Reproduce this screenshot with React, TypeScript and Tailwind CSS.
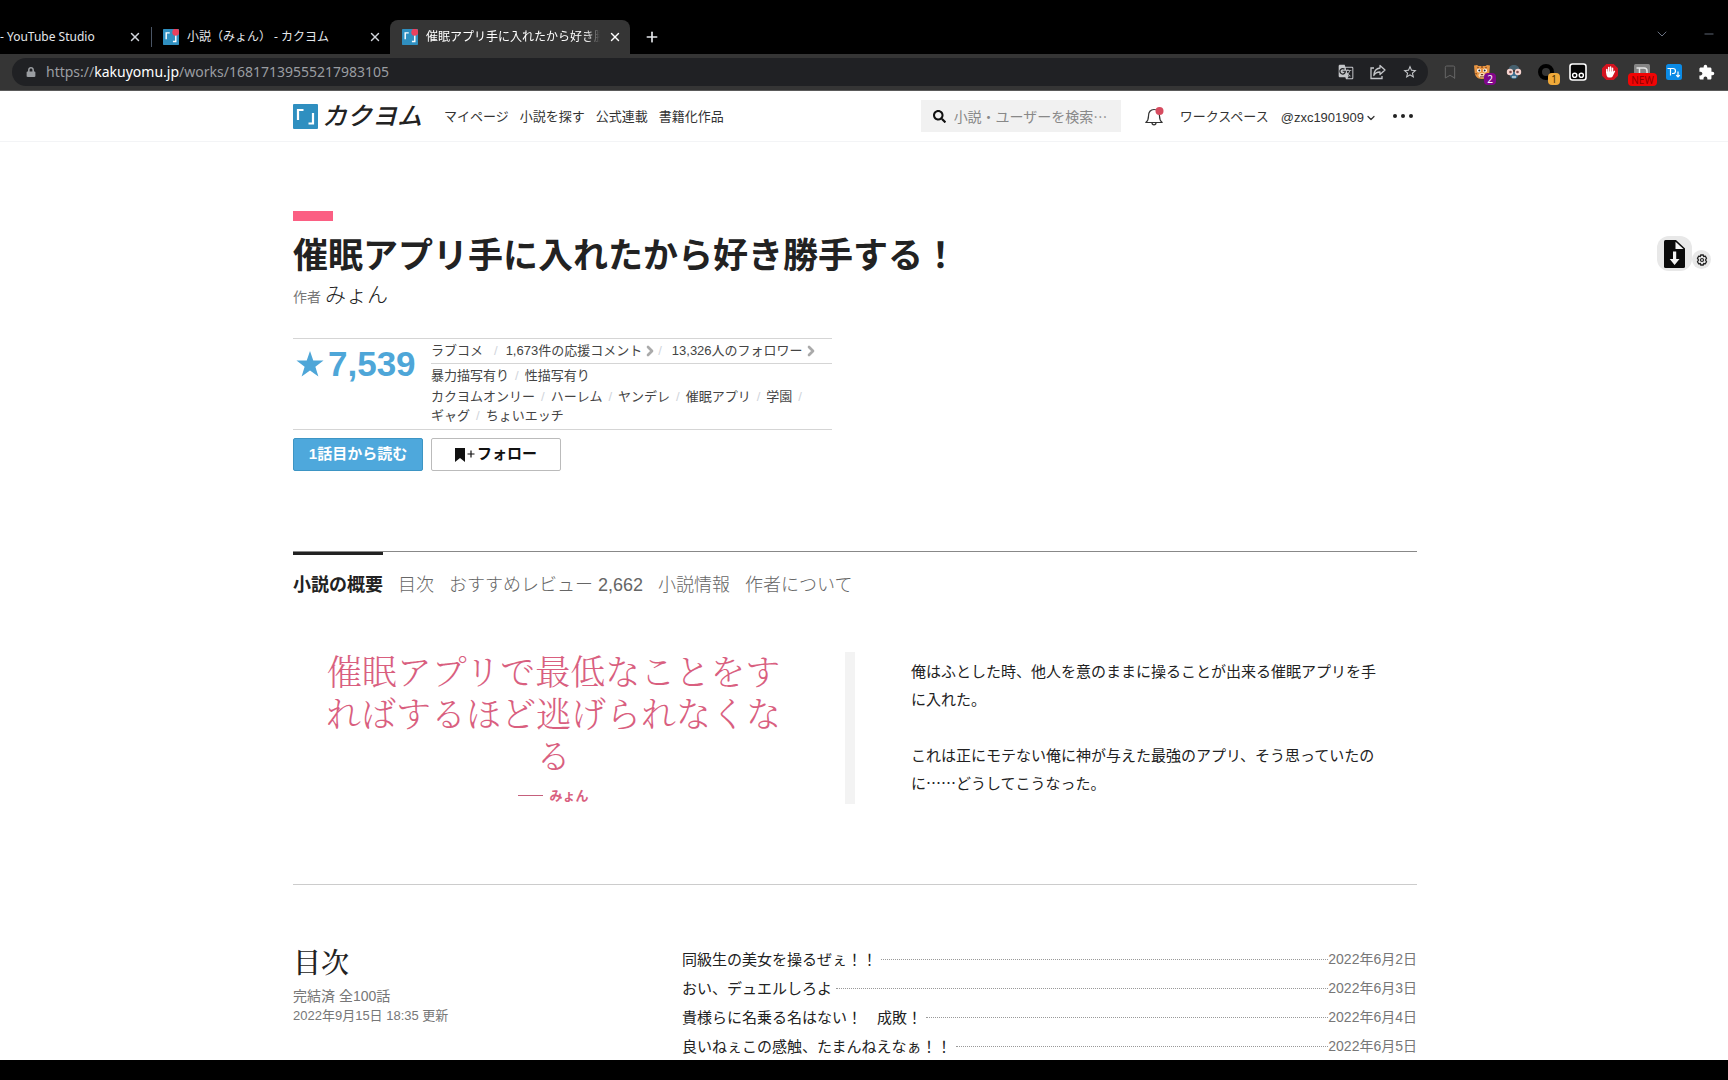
import type { ReactNode } from "react";
import { Bookmark, ChevronDown, ChevronRight, Minus, Plus, X } from "lucide-react";
import { FaLock, FaSearch } from "react-icons/fa";
import { MdExtension, MdGTranslate, MdStarBorder } from "react-icons/md";

const episodes = [
  { title: "同級生の美女を操るぜぇ！！", date: "2022年6月2日" },
  { title: "おい、デュエルしろよ", date: "2022年6月3日" },
  { title: "貴様らに名乗る名はない！　成敗！", date: "2022年6月4日" },
  { title: "良いねぇこの感触、たまんねえなぁ！！", date: "2022年6月5日" },
];

const tagRows = [
  ["カクヨムオンリー", "ハーレム", "ヤンデレ", "催眠アプリ", "学園"],
  ["ギャグ", "ちょいエッチ"],
];

function Brand({ dot = false, className }: { dot?: boolean; className: string }) {
  return (
    <svg viewBox="0 0 25 25" className={className} aria-hidden="true">
      <rect width="25" height="25" rx="1" fill="#2f8fc0" />
      <path d="M5 16V6h5.500" fill="none" stroke="#fff" strokeWidth="2.200" />
      <path d="M20 9v10.500h-4.500" fill="none" stroke="#fff" strokeWidth="2.200" />
      {dot && <circle cx="20" cy="5" r="5.500" fill="#e8415e" />}
    </svg>
  );
}

function CloseButton({ bright = false }: { bright?: boolean }) {
  return (
    <button aria-label="タブを閉じる" className={bright ? "text-white" : "text-gray-300"}>
      <X className="size-3.5" strokeWidth={2.5} />
    </button>
  );
}

function TabStrip() {
  return (
    <div className="flex h-[54px] items-end bg-black text-[12px] text-gray-200">
      <div className="flex h-[34px] w-[151px] items-center justify-between border-r border-transparent pr-2">
        <span className="whitespace-nowrap">- YouTube Studio</span>
        <CloseButton />
      </div>
      <div className="flex h-[34px] w-[239px] items-center">
        <span className="h-5 w-px bg-gray-600" />
        <Brand dot className="ml-[11px] size-4" />
        <span className="ml-2 flex-1 whitespace-nowrap">小説（みょん） - カクヨム</span>
        <span className="flex pr-2">
          <CloseButton />
        </span>
      </div>
      <div className="flex h-[34px] w-[240px] items-center rounded-t-lg bg-[#353535] pr-2 pl-3 text-white">
        <Brand dot className="size-4 shrink-0" />
        <span className="ml-2 flex-1 overflow-hidden whitespace-nowrap [mask-image:linear-gradient(to_right,black_92%,transparent)]">
          催眠アプリ手に入れたから好き勝手する！
        </span>
        <span className="ml-2 flex">
          <CloseButton bright />
        </span>
      </div>
      <button aria-label="新しいタブ" className="flex h-[34px] items-center pl-3.5 text-gray-200">
        <Plus className="size-4" strokeWidth={2.5} />
      </button>
      <div className="ml-auto flex h-[40px] items-center gap-8 pr-3 text-gray-500">
        <button aria-label="タブを検索">
          <ChevronDown className="size-4" strokeWidth={1.5} />
        </button>
        <button aria-label="最小化">
          <Minus className="size-3.5" strokeWidth={1.5} />
        </button>
      </div>
    </div>
  );
}

function ShareIcon() {
  return (
    <svg viewBox="0 0 16 16" className="size-4" fill="none" stroke="currentColor" strokeWidth="1.300" aria-hidden="true">
      <path d="M4 4H1v10.500h11V12" />
      <path d="M10 1.500l5 4.500-5 4.500V8C7 8 5 9 3.800 11.500 4 7.500 6 4.500 10 4z" strokeLinejoin="round" />
    </svg>
  );
}

function CookieIcon() {
  return (
    <svg viewBox="0 0 16 16" className="size-4" aria-hidden="true">
      <path d="M0 1.500L3 1l1.500 1h7L13 1l3 .5-.5 5C15.500 11.500 13 15 8 15S.5 11.500.5 6.500z" fill="#e79543" />
      <circle cx="5" cy="6.500" r="2" fill="#fff" />
      <circle cx="11" cy="6.500" r="2" fill="#fff" />
      <circle cx="5.300" cy="6.500" r="1" fill="#222" />
      <circle cx="10.700" cy="6.500" r="1" fill="#222" />
      <path d="M3.500 3.200l1 .8M8 2v2M12.500 3.200l-1 .8M1.500 9.500l1.300.5M14.500 9.500l-1.300.5" stroke="#7a3c14" strokeWidth="1.200" />
      <ellipse cx="8" cy="11.300" rx="3.500" ry="2.500" fill="#f7d9b0" />
      <path d="M6.500 10h3L8 11.500zM6 12.500h4v.8H6z" fill="#5a2410" />
    </svg>
  );
}

function SpyIcon() {
  return (
    <svg viewBox="0 0 16 16" className="size-4" aria-hidden="true">
      <path d="M2.500 6c0-3.500 2.500-5 5.500-5s5.500 1.500 5.500 5z" fill="#46606e" />
      <path d="M4 8h8v3c0 2.500-2 4-4 4s-4-1.500-4-4z" fill="#3d6f8f" />
      <circle cx="4" cy="8" r="3.200" fill="#f6d3cf" />
      <circle cx="12" cy="8" r="3.200" fill="#f6d3cf" />
      <circle cx="4.500" cy="8" r="1.300" fill="#7c4a4a" />
      <circle cx="11.500" cy="8" r="1.300" fill="#7c4a4a" />
      <path d="M6 13h4" stroke="#dfe8ee" strokeWidth="1.300" />
    </svg>
  );
}

function MonkeyIcon() {
  return (
    <svg viewBox="0 0 18 18" className="size-[18px]" aria-hidden="true">
      <rect x="1" y="1" width="16" height="16" rx="2.500" fill="#050505" stroke="#fff" strokeWidth="1.600" />
      <circle cx="5.700" cy="12.300" r="2.100" fill="none" stroke="#fff" strokeWidth="1.400" />
      <circle cx="12.300" cy="12.300" r="2.100" fill="none" stroke="#fff" strokeWidth="1.400" />
    </svg>
  );
}

function BlockerIcon() {
  return (
    <svg viewBox="0 0 18 18" className="size-[18px]" aria-hidden="true">
      <path d="M5.300 1h7.400L17 5.300v7.400L12.700 17H5.300L1 12.700V5.300z" fill="#d3131f" />
      <path
        d="M5.800 6.500V9.500M7.700 4.500V9.500M9.600 4V9.500M11.500 5.200V9.500"
        stroke="#fff"
        strokeWidth="1.500"
        strokeLinecap="round"
      />
      <path d="M5.100 8.500h7.200l1.500-1 .4.800-2.600 5.200q-.6 1-1.800 1H8q-1.500 0-2.200-1.500-.7-1.700-.7-4.500z" fill="#fff" />
    </svg>
  );
}

function Extension({ label, children }: { label: string; children: ReactNode }) {
  return (
    <button aria-label={label} className="relative flex size-8 items-center justify-center">
      {children}
    </button>
  );
}

function Toolbar() {
  return (
    <div className="flex h-[37px] items-center border-b border-[#5a5a5a] bg-[#353535] pr-1.5 pl-3">
      <div className="flex h-7 flex-1 items-center rounded-full bg-[#202124] pr-[10px] pl-3.5 text-[#9a9da1]">
        <FaLock className="size-[10px] shrink-0" />
        <div className="ml-2.5 flex-1 text-[14px] leading-5">
          https://<span className="text-white">kakuyomu.jp</span>/works/16817139555217983105
        </div>
        <div className="flex gap-4 text-[#c4c6c9]">
          <button aria-label="翻訳">
            <MdGTranslate className="size-4" />
          </button>
          <button aria-label="共有">
            <ShareIcon />
          </button>
          <button aria-label="ブックマークに追加">
            <MdStarBorder className="size-4" />
          </button>
        </div>
      </div>
      <div className="ml-1.5 flex">
        <Extension label="しおり">
          <Bookmark className="size-4 text-[#666]" strokeWidth={1.5} />
        </Extension>
        <Extension label="クッキー">
          <CookieIcon />
          <span className="absolute top-[17px] left-[18px] flex h-3 w-3 items-center justify-center rounded-sm bg-[#80078a] text-[10px] leading-3 text-white">
            2
          </span>
        </Extension>
        <Extension label="スパイ">
          <SpyIcon />
        </Extension>
        <Extension label="リング">
          <span className="size-4 rounded-full border-4 border-black" />
          <span className="absolute top-[17px] left-[18px] flex h-3 w-3 items-center justify-center rounded-sm bg-[#efa93a] text-[10px] leading-3 text-[#4a3200]">
            1
          </span>
        </Extension>
        <Extension label="スクリプト管理">
          <MonkeyIcon />
        </Extension>
        <Extension label="広告ブロック">
          <BlockerIcon />
        </Extension>
        <Extension label="新機能">
          <svg viewBox="0 0 16 16" className="size-4" aria-hidden="true">
            <rect width="16" height="16" rx="1.500" fill="#858585" />
            <path d="M2.500 4h7.500a3 3 0 013 3v2M5.500 4v6" fill="none" stroke="#e6e6e6" strokeWidth="1.500" />
          </svg>
          <span className="absolute top-[17px] left-[2px] flex h-[13px] w-[29px] items-center justify-center rounded-sm bg-[#f20505] text-[10px] leading-3 text-[#8f0000]">
            NEW
          </span>
        </Extension>
        <Extension label="ダウンロード">
          <svg viewBox="0 0 16 16" className="size-4" aria-hidden="true">
            <rect width="16" height="16" rx="2.500" fill="#0b8be6" />
            <path
              d="M1.500 4.500H7a2.500 2.500 0 010 5H6M4.500 4.500V11.500M12 7.500v5.500M10.200 11.200L12 13l1.800-1.800"
              fill="none"
              stroke="#fff"
              strokeWidth="1.200"
            />
          </svg>
        </Extension>
        <Extension label="拡張機能">
          <MdExtension className="size-[17px] text-white" />
        </Extension>
      </div>
    </div>
  );
}

function SiteHeader() {
  return (
    <header className="border-b border-gray-100 pr-[18px]">
      <div className="mx-auto flex h-[50px] max-w-[1124px] items-center text-[13px] text-[#333]">
        <a href="#top" className="flex items-center gap-1">
          <Brand className="size-[25px]" />
          <span className="text-[25px] leading-8 font-medium text-[#222] italic">カクヨム</span>
        </a>
        <nav className="ml-[22px] flex gap-[11px] pt-0.5">
          <a href="#mypage">マイページ</a>
          <a href="#search">小説を探す</a>
          <a href="#official">公式連載</a>
          <a href="#books">書籍化作品</a>
        </nav>
        <div className="ml-auto flex items-center">
          <label className="flex h-8 w-[200px] items-center gap-2 bg-[#f1f1f1] pl-3">
            <FaSearch className="size-[13px] text-[#111]" aria-label="検索" />
            <input
              type="search"
              placeholder="小説・ユーザーを検索…"
              className="min-w-0 flex-1 bg-transparent font-['Noto_Sans_CJK_JP',sans-serif] text-[14px] outline-none placeholder:text-[#888]"
            />
          </label>
          <button aria-label="通知" className="ml-6">
            <svg viewBox="0 0 19 19" className="size-[19px]" fill="none" stroke="#333" strokeWidth="1.200" aria-hidden="true">
              <path d="M.8 15.500C2.800 14 3.500 12 3.500 9c0-4 2-6.500 5.500-6.500s5.500 2.500 5.500 6.500c0 3 .7 5 2.700 6.500z" strokeLinejoin="round" />
              <path d="M7 15.800a2 2 0 004 0" />
              <circle cx="14.500" cy="4" r="4" fill="#d64b5f" stroke="none" />
            </svg>
          </button>
          <a href="#workspace" className="ml-4 pt-0.5">
            ワークスペース
          </a>
          <button className="ml-3 flex items-center pt-1">
            @zxc1901909
            <ChevronDown className="ml-px size-3" strokeWidth={2.5} />
          </button>
          <button aria-label="メニュー" className="ml-4 flex gap-1 pr-1">
            <span className="size-1 rounded-full bg-[#222]" />
            <span className="size-1 rounded-full bg-[#222]" />
            <span className="size-1 rounded-full bg-[#222]" />
          </button>
        </div>
      </div>
    </header>
  );
}

function Slash() {
  return <span className="text-gray-300">/</span>;
}

function WorkStats() {
  return (
    <section className="mt-[27px] flex max-w-[539px] border-y border-[#d5d5d5] text-[13px] text-[#444]">
      <div className="flex w-[138px] shrink-0 items-center self-start pt-1 pl-[3px] text-[#4ea6d8]">
        <svg viewBox="0 0 24 24" className="mr-1 size-7 shrink-0" fill="currentColor" aria-hidden="true">
          <path d="M12 .8l2.800 8.300H23.600l-7 5.200 2.600 8.500L12 17.600l-7.200 5.200 2.600-8.500-7-5.200h8.800z" />
        </svg>
        <span className="text-[35px] leading-[42px] font-bold">7,539</span>
      </div>
      <div className="flex-1 pb-1">
        <div className="flex h-[25px] items-center border-b border-[#d5d5d5]">
          <a href="#genre">ラブコメ</a>
          <span className="mr-2 ml-[11px]">
            <Slash />
          </span>
          <a href="#comments" className="flex items-center">
            1,673件の応援コメント
            <ChevronRight className="size-4 text-[#aaa]" strokeWidth={4} />
          </a>
          <span className="mr-2.5">
            <Slash />
          </span>
          <a href="#followers" className="flex items-center">
            13,326人のフォロワー
            <ChevronRight className="size-4 text-[#aaa]" strokeWidth={4} />
          </a>
        </div>
        <div className="flex gap-1.5 leading-[23px]">
          <span>暴力描写有り</span>
          <Slash />
          <span>性描写有り</span>
        </div>
        {tagRows.map((tags, row) => (
          <ul key={tags[0]} className="flex gap-1.5 leading-[19px]">
            {tags.map((tag, i) => (
              <li key={tag} className="flex gap-1.5">
                <a href="#tag">{tag}</a>
                {(row === 0 || i < tags.length - 1) && <Slash />}
              </li>
            ))}
          </ul>
        ))}
      </div>
    </section>
  );
}

function WorkIntro() {
  return (
    <div className="pt-[69px]">
      <div className="h-2.5 w-10 bg-[#fb5f83]" />
      <h1 className="mt-[11px] text-[35px] leading-[48px] font-bold text-[#222]">催眠アプリ手に入れたから好き勝手する！</h1>
      <p className="flex h-[31px] items-center gap-1">
        <span className="pt-1 text-[14px] text-[#777]">作者</span>
        <a href="#author" className="pb-0.5 text-[21px] leading-7 font-light text-[#222]">
          みょん
        </a>
      </p>
      <WorkStats />
      <div className="mt-2 flex gap-2 text-[15px] font-bold">
        <button className="h-[33px] w-[130px] rounded-xs border border-[#3d95c4] bg-[#4ea8dc] text-white">1話目から読む</button>
        <button className="flex h-[33px] w-[130px] items-center justify-center rounded-xs border border-[#bbb] text-[#111]">
          <svg viewBox="0 0 20 14" className="mr-0.5 h-3.5 w-5" aria-hidden="true">
            <path d="M0 0h10v14l-5-4-5 4z" fill="#111" />
            <path d="M12.500 6H19.500M16 2.500v7" stroke="#111" strokeWidth="1.200" />
          </svg>
          フォロー
        </button>
      </div>
    </div>
  );
}

function SectionTabs() {
  return (
    <nav className="mt-20 flex gap-[15px] border-t border-[#888] text-[18px] leading-7 font-light text-[#666]">
      <a href="#summary" className="border-t-[3px] border-[#222] pt-4 font-bold text-[#222]">
        小説の概要
      </a>
      <a href="#toc" className="pt-[19px]">目次</a>
      <a href="#reviews" className="pt-[19px]">おすすめレビュー 2,662</a>
      <a href="#info" className="pt-[19px]">小説情報</a>
      <a href="#about" className="pt-[19px]">作者について</a>
    </nav>
  );
}

function Summary() {
  return (
    <section id="summary" className="mt-[53px] flex border-b border-[#ccc] pb-20">
      <figure className="min-w-0 flex-1 text-center text-[#d95f7f]">
        <blockquote className="-mt-[3px] px-[31px] font-['Noto_Serif_CJK_JP','Noto_Serif_JP','Noto_Sans_CJK_JP',serif] text-[35px] leading-[42px] font-light">
          <p className="mr-[31px]">催眠アプリで最低なことをすればするほど逃げられなくなる</p>
        </blockquote>
        <figcaption className="mt-3 mr-[31px] flex items-center justify-center gap-1.5 text-[13px] leading-[17px] font-bold">
          <span className="h-px w-[25px] bg-[#c5607c]" />
          みょん
        </figcaption>
      </figure>
      <div className="w-2.5 shrink-0 bg-[#f3f3f3]" />
      <div className="w-1/2 shrink-0 pr-[29px] pl-14 font-['Noto_Sans_CJK_JP',sans-serif] text-[15px] leading-7 text-[#222]">
        <p className="pt-[5px]">俺はふとした時、他人を意のままに操ることが出来る催眠アプリを手に入れた。</p>
        <p className="pt-7">これは正にモテない俺に神が与えた最強のアプリ、そう思っていたのに……どうしてこうなった。</p>
      </div>
    </section>
  );
}

function TableOfContents() {
  return (
    <section id="toc" className="flex pt-14">
      <div className="w-[389px] shrink-0 text-[#777]">
        <h2 className="font-['Noto_Serif_CJK_JP','Noto_Serif_JP','Noto_Sans_CJK_JP',serif] text-[28px] leading-10 font-medium text-[#222]">
          目次
        </h2>
        <p className="mt-1 text-[14px] leading-[22px]">完結済 全100話</p>
        <p className="text-[13px] leading-[18px]">2022年9月15日 18:35 更新</p>
      </div>
      <ol className="flex-1 pt-1 leading-[29px]">
        {episodes.map((episode) => (
          <li key={episode.date}>
            <a href="#episode" className="flex items-center">
              <span className="text-[15px] text-[#222]">{episode.title}</span>
              <span className="ml-1 flex-1 border-t border-dotted border-[#999]" />
              <time className="text-[14px] text-[#777]">{episode.date}</time>
            </a>
          </li>
        ))}
      </ol>
    </section>
  );
}

function DownloadWidget() {
  return (
    <div className="fixed top-[236px] right-[17px] flex items-center">
      <button aria-label="ダウンロード" className="flex size-[35px] items-center justify-center rounded-xl bg-[#e8e8e8]">
        <svg viewBox="0 0 21 28" className="h-7 w-[21px]" aria-hidden="true">
          <path d="M1.500 0H12l9 8.500V26.500Q21 28 19.500 28H1.500Q0 28 0 26.500V1.500Q0 0 1.500 0z" fill="#0a0a0a" />
          <path d="M11.500 1.800V9h8z" fill="#f4f4f4" />
          <path d="M9 11.500h3.200V19H15.500l-4.900 6L5.700 19H9z" fill="#f4f4f4" />
        </svg>
      </button>
      <button aria-label="設定" className="mt-3 flex size-[19px] items-center justify-center rounded-full bg-[#e8e8e8]">
        <svg viewBox="0 0 12 12" className="size-3" fill="none" stroke="#222" aria-hidden="true">
          <path d="M4.800 1h2.400l.5 1.500 1.600-.3 1.200 2L9.500 6l1 1.800-1.200 2-1.600-.3L7.200 11H4.800l-.5-1.500-1.600.3-1.200-2L2.500 6l-1-1.800 1.200-2 1.600.3z" strokeWidth="1.300" />
          <circle cx="6" cy="6" r="1.500" strokeWidth="1.200" />
        </svg>
      </button>
    </div>
  );
}

export default function App() {
  return (
    <div className="flex h-screen flex-col overflow-hidden bg-white font-['Liberation_Sans','Noto_Sans_CJK_JP',sans-serif]">
      <div className="shrink-0 font-['Noto_Sans','Noto_Sans_CJK_JP',sans-serif]">
        <TabStrip />
        <Toolbar />
      </div>
      <div className="min-h-0 flex-1 overflow-hidden">
        <SiteHeader />
        <main className="pr-[18px]">
          <div className="mx-auto max-w-[1124px]">
            <WorkIntro />
            <SectionTabs />
            <Summary />
            <TableOfContents />
          </div>
        </main>
      </div>
      <div className="h-5 shrink-0 bg-black" />
      <DownloadWidget />
    </div>
  );
}
